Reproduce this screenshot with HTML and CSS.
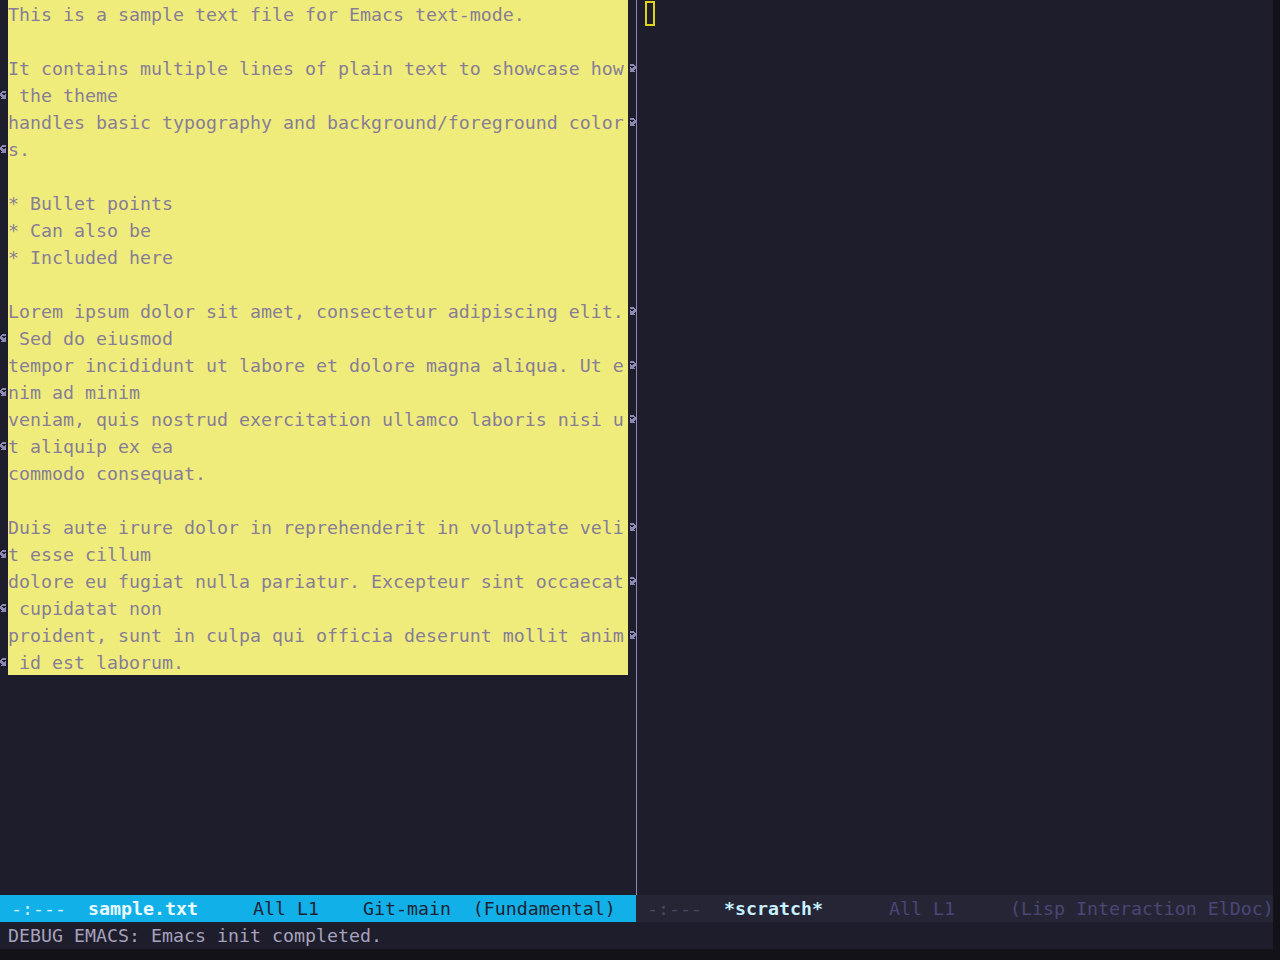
FILE: index.html
```html
<!DOCTYPE html>
<html lang="en">
<head>
    <meta charset="UTF-8">
    <title>Emacs - sample.txt</title>
    <link rel="stylesheet" href="styles.css">
</head>
<body>

    <!-- fringe bitmaps, same as emacs' curly continuation arrows -->
    <svg class="defs" width="0" height="0">
        <symbol id="arrow-left" viewBox="0 0 8 8">
            <path d="M2 0h4v1h-4z M1 1h5v1h-5z M0 2h2v1h-2z M0 3h3v1h-3z M5 3h1v1h-1z M0 4h6v1h-6z M1 5h5v1h-5z M2 6h4v1h-4z M1 7h5v1h-5z"/>
        </symbol>
        <symbol id="arrow-right" viewBox="0 0 8 8">
            <path d="M2 0h4v1h-4z M2 1h5v1h-5z M6 2h2v1h-2z M2 3h1v1h-1z M5 3h3v1h-3z M2 4h6v1h-6z M2 5h5v1h-5z M2 6h4v1h-4z M2 7h5v1h-5z"/>
        </symbol>
    </svg>

    <div class="frame">
        <div class="windows">

            <!-- Left window: sample.txt -->
            <section class="window window-left">
                <div class="window-body">
                    <div class="line"><span class="fringe"></span><span class="text">This is a sample text file for Emacs text-mode.</span><span class="fringe"></span></div>
                    <div class="line"><span class="fringe"></span><span class="text"></span><span class="fringe"></span></div>
                    <div class="line"><span class="fringe"></span><span class="text">It contains multiple lines of plain text to showcase how</span><span class="fringe"><svg class="arrow"><use href="#arrow-right"/></svg></span></div>
                    <div class="line"><span class="fringe"><svg class="arrow"><use href="#arrow-left"/></svg></span><span class="text"> the theme</span><span class="fringe"></span></div>
                    <div class="line"><span class="fringe"></span><span class="text">handles basic typography and background/foreground color</span><span class="fringe"><svg class="arrow"><use href="#arrow-right"/></svg></span></div>
                    <div class="line"><span class="fringe"><svg class="arrow"><use href="#arrow-left"/></svg></span><span class="text">s.</span><span class="fringe"></span></div>
                    <div class="line"><span class="fringe"></span><span class="text"></span><span class="fringe"></span></div>
                    <div class="line"><span class="fringe"></span><span class="text">* Bullet points</span><span class="fringe"></span></div>
                    <div class="line"><span class="fringe"></span><span class="text">* Can also be</span><span class="fringe"></span></div>
                    <div class="line"><span class="fringe"></span><span class="text">* Included here</span><span class="fringe"></span></div>
                    <div class="line"><span class="fringe"></span><span class="text"></span><span class="fringe"></span></div>
                    <div class="line"><span class="fringe"></span><span class="text">Lorem ipsum dolor sit amet, consectetur adipiscing elit.</span><span class="fringe"><svg class="arrow"><use href="#arrow-right"/></svg></span></div>
                    <div class="line"><span class="fringe"><svg class="arrow"><use href="#arrow-left"/></svg></span><span class="text"> Sed do eiusmod</span><span class="fringe"></span></div>
                    <div class="line"><span class="fringe"></span><span class="text">tempor incididunt ut labore et dolore magna aliqua. Ut e</span><span class="fringe"><svg class="arrow"><use href="#arrow-right"/></svg></span></div>
                    <div class="line"><span class="fringe"><svg class="arrow"><use href="#arrow-left"/></svg></span><span class="text">nim ad minim</span><span class="fringe"></span></div>
                    <div class="line"><span class="fringe"></span><span class="text">veniam, quis nostrud exercitation ullamco laboris nisi u</span><span class="fringe"><svg class="arrow"><use href="#arrow-right"/></svg></span></div>
                    <div class="line"><span class="fringe"><svg class="arrow"><use href="#arrow-left"/></svg></span><span class="text">t aliquip ex ea</span><span class="fringe"></span></div>
                    <div class="line"><span class="fringe"></span><span class="text">commodo consequat.</span><span class="fringe"></span></div>
                    <div class="line"><span class="fringe"></span><span class="text"></span><span class="fringe"></span></div>
                    <div class="line"><span class="fringe"></span><span class="text">Duis aute irure dolor in reprehenderit in voluptate veli</span><span class="fringe"><svg class="arrow"><use href="#arrow-right"/></svg></span></div>
                    <div class="line"><span class="fringe"><svg class="arrow"><use href="#arrow-left"/></svg></span><span class="text">t esse cillum</span><span class="fringe"></span></div>
                    <div class="line"><span class="fringe"></span><span class="text">dolore eu fugiat nulla pariatur. Excepteur sint occaecat</span><span class="fringe"><svg class="arrow"><use href="#arrow-right"/></svg></span></div>
                    <div class="line"><span class="fringe"><svg class="arrow"><use href="#arrow-left"/></svg></span><span class="text"> cupidatat non</span><span class="fringe"></span></div>
                    <div class="line"><span class="fringe"></span><span class="text">proident, sunt in culpa qui officia deserunt mollit anim</span><span class="fringe"><svg class="arrow"><use href="#arrow-right"/></svg></span></div>
                    <div class="line"><span class="fringe"><svg class="arrow"><use href="#arrow-left"/></svg></span><span class="text"> id est laborum.</span><span class="fringe"></span></div>
                </div>
                <div class="mode-line active"> <span class="ml-flags">-:---</span>  <span class="ml-buffer">sample.txt</span>     All L1    Git-main  (Fundamental)</div>
            </section>

            <!-- Right window: *scratch* -->
            <section class="window window-right">
                <div class="window-body">
                    <div class="line"><span class="fringe"></span><span class="text plain"><span class="cursor"></span></span></div>
                </div>
                <div class="mode-line inactive"> <span class="ml-flags">-:---</span>  <span class="ml-buffer">*scratch*</span>      All L1     (Lisp Interaction ElDoc)</div>
            </section>

        </div>

        <!-- Echo area -->
        <div class="echo">DEBUG EMACS: Emacs init completed.</div>
    </div>

</body>
</html>
```

FILE: styles.css
```css
body {
    margin: 0;
    background-color: #131219;
    font-family: 'DejaVu Sans Mono', 'Liberation Mono', monospace;
    font-size: 18.27px;
}
.defs {
    position: absolute;
    width: 0;
    height: 0;
}
.frame {
    width: 1273px;
    height: 949px;
    display: flex;
    flex-direction: column;
    background-color: #1e1d2b;
}
.windows {
    display: flex;
    height: 922px;
}
.window {
    display: flex;
    flex-direction: column;
}
.window-left {
    width: 636px;
}
.window-right {
    flex: 1;
    min-width: 0;
}
.window-body {
    flex: 1;
}
.window-right .window-body {
    border-left: 1px solid #8e8ab4;
}
.line {
    display: flex;
    height: 27px;
    line-height: 27px;
}
.fringe {
    width: 8px;
    flex-shrink: 0;
    display: flex;
    align-items: center;
}
.arrow {
    width: 8px;
    height: 8px;
    fill: #8d87b3;
    shape-rendering: crispEdges;
}
.text {
    width: 620px;
    white-space: pre;
    overflow: hidden;
    background-color: #f0ec7c;
    color: #877e96;
    padding-top: 1px;
    box-sizing: border-box;
}
.text.plain {
    background-color: transparent;
    padding-top: 0;
    display: flex;
    align-items: center;
}
.cursor {
    display: block;
    width: 10px;
    height: 25px;
    box-sizing: border-box;
    border: 2px solid #e2d21a;
}
.mode-line {
    height: 27px;
    line-height: 28px;
    white-space: pre;
    overflow: hidden;
}
.mode-line.active {
    background-color: #11b0e8;
    color: #1c2434;
}
.mode-line.active .ml-flags {
    color: #d2f0fb;
}
.mode-line.active .ml-buffer {
    color: #e8faff;
    font-weight: bold;
}
.mode-line.inactive {
    background-color: #262536;
    color: #4a4675;
}
.mode-line.inactive .ml-flags {
    color: #49475e;
}
.mode-line.inactive .ml-buffer {
    color: #c6f1ff;
    font-weight: bold;
}
.echo {
    height: 27px;
    line-height: 28px;
    padding-left: 8px;
    color: #a6a1bd;
    white-space: pre;
}
```
